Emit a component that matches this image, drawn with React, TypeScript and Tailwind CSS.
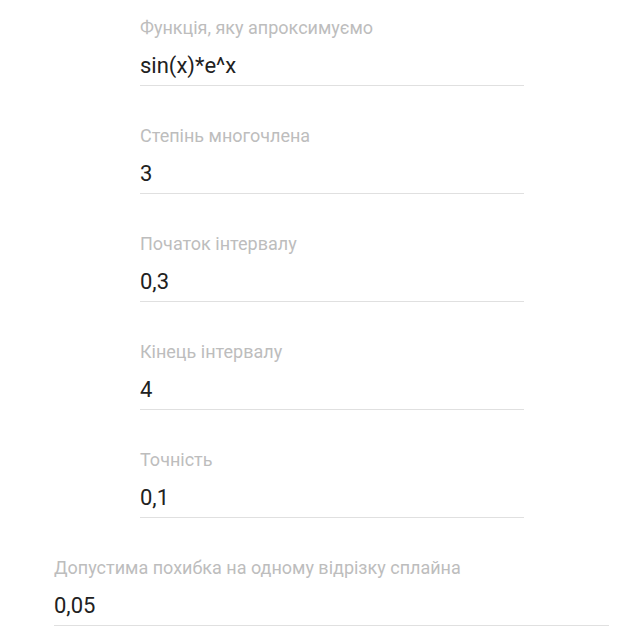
const fields = [
  { label: 'Функція, яку апроксимуємо', value: 'sin(x)*e^x' },
  { label: 'Степінь многочлена', value: '3' },
  { label: 'Початок інтервалу', value: '0,3' },
  { label: 'Кінець інтервалу', value: '4' },
  { label: 'Точність', value: '0,1' },
];

function Field({ label, value, wide }: { label: string; value: string; wide?: boolean }) {
  return (
    <div className={wide ? 'ml-[54px] w-[555px] h-[108px] flex flex-col' : 'ml-[140px] w-[384px] h-[108px] flex flex-col'}>
      <label className="mt-[16px] h-[24px] text-[18px] leading-[24px] text-[#bdbdbd]">{label}</label>
      <input
        className="mt-[8px] h-[36px] text-[22px] leading-[36px] text-[#212121] outline-none bg-transparent"
        defaultValue={value}
      />
      <div className="mt-[1px] h-px bg-[#e0e0e0]" />
    </div>
  );
}

export default function App() {
  return (
    <div className="min-h-screen bg-white" style={{ fontFamily: 'Roboto, sans-serif' }}>
      {fields.map((f) => (
        <Field key={f.label} label={f.label} value={f.value} />
      ))}
      <Field label="Допустима похибка на одному відрізку сплайна" value="0,05" wide />
    </div>
  );
}
